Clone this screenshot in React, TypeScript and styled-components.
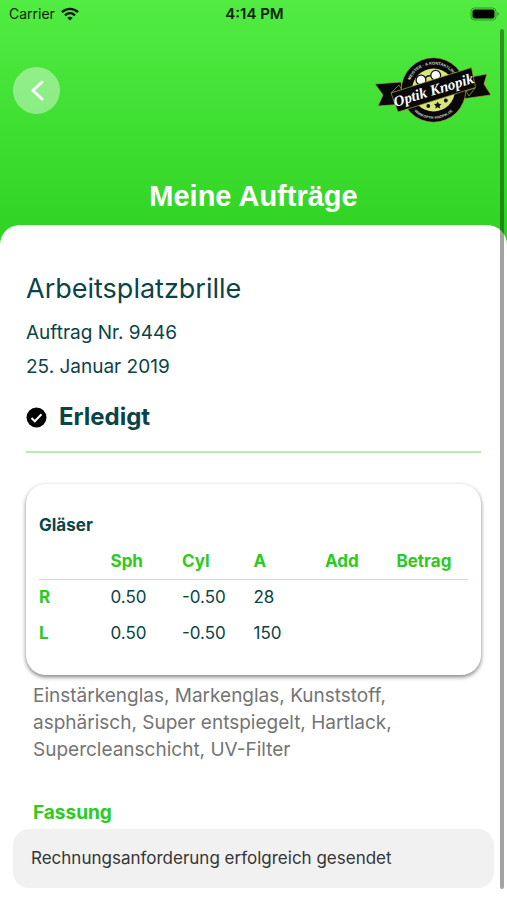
import React from "react";
import styled, { createGlobalStyle } from "styled-components";

const GlobalStyle = createGlobalStyle`
  * { box-sizing: border-box; }
  body {
    margin: 0;
    background: #fff;
    font-family: Inter, "Liberation Sans", sans-serif;
    color: #0b4447;
  }
`;

const Page = styled.div`
  height: 100vh;
  overflow: hidden;
  background: linear-gradient(#52ec42 0, #2fd324 240px, #2fd324 100%);
`;

const StatusBar = styled.div`
  display: grid;
  grid-template-columns: 1fr auto 1fr;
  align-items: center;
  height: 27px;
  padding: 0 7px 0 9px;
  color: #0a2208;
  font-size: 14px;
`;

const Carrier = styled.span`
  display: flex;
  align-items: center;
  gap: 6px;
`;

const Clock = styled.time`
  font-size: 15px;
  font-weight: 600;
`;

const Battery = styled.svg`
  justify-self: end;
`;

const TopBar = styled.div`
  display: flex;
  align-items: center;
  justify-content: space-between;
  height: 126px;
  padding: 0 15px 0 13px;
`;

const BackButton = styled.button`
  display: grid;
  place-items: center;
  width: 47px;
  height: 47px;
  padding: 0;
  border: 0;
  border-radius: 50%;
  background: rgba(255, 255, 255, 0.4);
`;

const PageTitle = styled.h1`
  margin: 0;
  padding: 23px 0 9px;
  color: #fff;
  font: 700 29px/40px "Liberation Sans", Arial, sans-serif;
  text-align: center;
`;

const Sheet = styled.main`
  min-height: 100%;
  padding: 46px 26px 0;
  border-radius: 20px 20px 0 0;
  background: #fff;
`;

const OrderName = styled.h2`
  margin: 0 0 9px;
  font-size: 27px;
  line-height: 36px;
  font-weight: 400;
`;

const OrderLine = styled.p`
  margin: 0;
  font-size: 19px;
  line-height: 34px;
`;

const Status = styled.p`
  display: flex;
  align-items: center;
  gap: 12px;
  margin: 17px 0 18px;
  font-size: 24px;
  line-height: 32px;
  font-weight: 700;
`;

const Divider = styled.hr`
  height: 2px;
  margin: 0 0 31px;
  border: 0;
  background: #b9edb2;
`;

const Card = styled.section`
  padding: 30px 13px 24px;
  border-radius: 20px;
  background: #fff;
  box-shadow: 0 2px 4px rgba(0, 0, 0, 0.5);
`;

const CardTitle = styled.h3`
  margin: 0 0 7px;
  font-size: 17px;
  line-height: 22px;
  font-weight: 700;
`;

const LensTable = styled.table`
  width: 100%;
  table-layout: fixed;
  border-collapse: collapse;
  font-size: 17px;
  text-align: left;

  th, td {
    height: 36px;
    padding: 0;
  }
  th {
    color: #2bcb20;
    font-weight: 700;
  }
  thead th {
    border-bottom: 1px solid #b9edb2;
  }
`;

const Details = styled.section`
  padding: 7px 7px 0;
`;

const Description = styled.p`
  margin: 0 0 38px;
  color: #747474;
  font-size: 19px;
  line-height: 27px;
`;

const FrameTitle = styled.h3`
  margin: 0;
  color: #2bcb20;
  font-size: 19px;
  line-height: 24px;
  font-weight: 700;
`;

const Toast = styled.div`
  position: fixed;
  right: 13px;
  bottom: 12px;
  left: 13px;
  padding: 18px;
  border-radius: 16px;
  background: #f1f1f1;
  color: #353535;
  font-size: 17px;
  line-height: 23px;
`;

const ScrollIndicator = styled.div`
  position: fixed;
  top: 29px;
  right: 3px;
  bottom: 11px;
  width: 4px;
  border-radius: 2px;
  background: rgba(0, 0, 0, 0.36);
`;

const columns = ["Sph", "Cyl", "A", "Add", "Betrag"];
const lenses = [
  { side: "R", values: ["0.50", "-0.50", "28", "", ""] },
  { side: "L", values: ["0.50", "-0.50", "150", "", ""] },
];

function WifiIcon() {
  return (
    <svg width="18" height="14" viewBox="0 0 18 14" fill="none" stroke="#001500" strokeWidth="2.4" aria-hidden="true">
      <path d="M1 5.2C5.6.8 12.4.8 17 5.2" />
      <path d="M4 8.3c2.9-2.7 7.1-2.7 10 0" />
      <path d="M6.300 10.700c1.600-1.400 3.800-1.400 5.400 0L9 13.500z" fill="#001500" stroke="none" />
    </svg>
  );
}

function BatteryIcon() {
  return (
    <Battery width="30" height="14" viewBox="0 0 30 14" role="img" aria-label="Akku voll">
      <rect x="1" y="1" width="25" height="12" rx="3.500" fill="none" stroke="#259a1c" />
      <rect x="2.500" y="2.500" width="22" height="9" rx="2" fill="#000" />
      <path d="M27.500 5q3 2 0 4z" fill="#259a1c" />
    </Battery>
  );
}

function Logo() {
  return (
    <svg width="118" height="70" viewBox="9 9 118 70" role="img" aria-label="Optik Knopik">
      <defs>
        <path id="ringTop" d="M43 44a25.500 25.500 0 0 1 51 0" />
        <path id="ringBottom" d="M46 62a29 29 0 0 0 45 0" />
      </defs>
      <g fill="#080808" stroke="#a5a83c" strokeWidth=".7" strokeLinejoin="round">
        <path d="M10 38l26-2 4 22-27 2 5-11z" />
        <path d="M100 32l22-4-3 10 7 11-29 4z" />
        <circle cx="68.500" cy="44" r="32.300" />
      </g>
      <circle cx="68.500" cy="44" r="21.500" fill="#d9e57a" />
      <g fill="#ddd" fontFamily="Liberation Sans, sans-serif" fontSize="4" fontWeight="700" textAnchor="middle">
        <text><textPath href="#ringTop" startOffset="50%">MEISTER · &amp; KONTAKTLINSEN</textPath></text>
        <text fontSize="3.500"><textPath href="#ringBottom" startOffset="50%">WWW.OPTIK-KNOPIK.DE</textPath></text>
      </g>
      <g fill="#fff" stroke="#111" strokeWidth="1.300">
        <path d="M60 32q3-3 6-2" fill="none" />
        <circle cx="56" cy="34" r="4.900" />
        <circle cx="70.700" cy="29.300" r="4.900" />
      </g>
      <g fill="#111">
        <path d="M72.700 55.500l1.200 2.300 2.500.3-1.800 1.800.5 2.600-2.400-1.200-2.300 1.200.4-2.600-1.800-1.800 2.500-.3z" />
        <circle cx="63.300" cy="60" r="1.900" />
        <circle cx="80.800" cy="54.500" r="1.900" />
      </g>
      <path d="M26 47l8-8 3 5z M110 42l-6 8-3-5z" fill="#080808" stroke="#a5a83c" strokeWidth=".7" />
      <path d="M26 47L106.500 21.500l4 20L33 66z" fill="#080808" stroke="#a5a83c" strokeWidth=".7" />
      <text
        transform="rotate(-17 68.500 44)"
        x="68.500"
        y="49"
        fill="#fff"
        fontFamily="Liberation Serif, serif"
        fontSize="15"
        fontStyle="italic"
        fontWeight="700"
        textAnchor="middle"
      >
        Optik Knopik
      </text>
    </svg>
  );
}

export default function App() {
  return (
    <Page>
      <GlobalStyle />
      <StatusBar>
        <Carrier>
          Carrier
          <WifiIcon />
        </Carrier>
        <Clock>4:14 PM</Clock>
        <BatteryIcon />
      </StatusBar>
      <TopBar>
        <BackButton type="button" aria-label="Zurück">
          <svg width="14" height="22" viewBox="0 0 14 22" fill="none" stroke="#fff" strokeWidth="3" strokeLinecap="round" strokeLinejoin="round" aria-hidden="true">
            <path d="M12 3L3 11.500l9 8.500" />
          </svg>
        </BackButton>
        <Logo />
      </TopBar>
      <PageTitle>Meine Aufträge</PageTitle>
      <Sheet>
        <OrderName>Arbeitsplatzbrille</OrderName>
        <OrderLine>Auftrag Nr. 9446</OrderLine>
        <OrderLine>25. Januar 2019</OrderLine>
        <Status>
          <svg width="21" height="21" viewBox="0 0 21 21" aria-hidden="true">
            <circle cx="10.500" cy="10.500" r="10" fill="#000" />
            <path d="M5.500 11l3.300 3.300 6.700-7" fill="none" stroke="#fff" strokeWidth="2" />
          </svg>
          Erledigt
        </Status>
        <Divider />
        <Card>
          <CardTitle id="lenses">Gläser</CardTitle>
          <LensTable aria-labelledby="lenses">
            <thead>
              <tr>
                <th aria-label="Seite" />
                {columns.map((c) => (
                  <th key={c} scope="col">{c}</th>
                ))}
              </tr>
            </thead>
            <tbody>
              {lenses.map((row) => (
                <tr key={row.side}>
                  <th scope="row">{row.side}</th>
                  {row.values.map((value, i) => (
                    <td key={columns[i]}>{value}</td>
                  ))}
                </tr>
              ))}
            </tbody>
          </LensTable>
        </Card>
        <Details>
          <Description>
            Einstärkenglas, Markenglas, Kunststoff, asphärisch, Super entspiegelt, Hartlack,
            Supercleanschicht, UV-Filter
          </Description>
          <FrameTitle>Fassung</FrameTitle>
        </Details>
      </Sheet>
      <Toast role="status">Rechnungsanforderung erfolgreich gesendet</Toast>
      <ScrollIndicator />
    </Page>
  );
}
